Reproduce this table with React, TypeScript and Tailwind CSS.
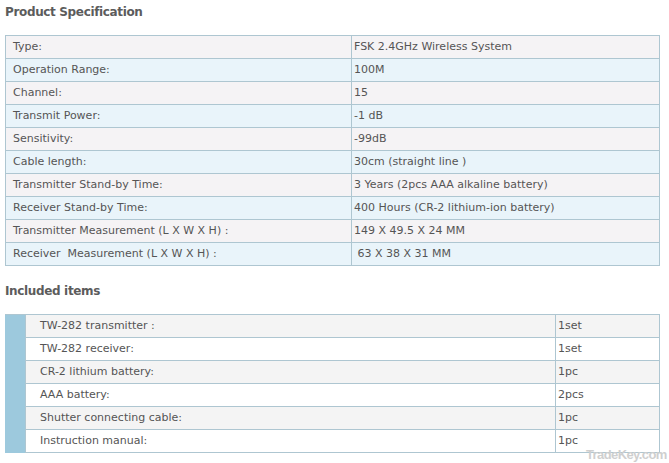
import React from "react";

const spec: [string, string][] = [
  ["Type:", "FSK 2.4GHz Wireless System"],
  ["Operation Range:", "100M"],
  ["Channel:", "15"],
  ["Transmit Power:", "-1 dB"],
  ["Sensitivity:", "-99dB"],
  ["Cable length:", "30cm (straight line )"],
  ["Transmitter Stand-by Time:", "3 Years (2pcs AAA alkaline battery)"],
  ["Receiver Stand-by Time:", "400 Hours (CR-2 lithium-ion battery)"],
  ["Transmitter Measurement (L X W X H) :", "149 X 49.5 X 24 MM"],
  ["Receiver\u00a0 Measurement (L X W X H) :", "\u00a063 X 38 X 31 MM"],
];

const items: [string, string][] = [
  ["TW-282 transmitter :", "1set"],
  ["TW-282 receiver:", "1set"],
  ["CR-2 lithium battery:", "1pc"],
  ["AAA battery:", "2pcs"],
  ["Shutter connecting cable:", "1pc"],
  ["Instruction manual:", "1pc"],
];

export default function App() {
  return (
    <div
      className="relative w-[669px] h-[463px] bg-white text-[#555] overflow-hidden"
      style={{ fontFamily: "Tahoma, 'DejaVu Sans', Verdana, sans-serif" }}
    >
      <div className="h-[35px] pl-[5px] pt-[3px] text-[12px] font-bold text-[#5c5c5c] leading-[18px] tracking-[-0.35px]">
        Product Specification
      </div>
      <div className="ml-[5px] w-[655px] border-l border-t border-[#aec6d1]">
        {spec.map(([a, b], i) => (
          <div
            key={i}
            className={`flex h-[23px] ${i % 2 === 0 ? "bg-[#f5f3f5]" : "bg-[#e9f4fa]"}`}
          >
            <div className="w-[346px] border-r border-b border-[#aec6d1] pl-[7px] text-[11px] leading-[22px] whitespace-pre">
              {a}
            </div>
            <div className="w-[308px] border-r border-b border-[#aec6d1] pl-[2px] text-[11px] leading-[22px] whitespace-pre">
              {b}
            </div>
          </div>
        ))}
      </div>
      <div className="h-[48px] pl-[5px] pt-[16px] text-[12px] font-bold text-[#5c5c5c] leading-[18px] tracking-[-0.35px]">
        Included items
      </div>
      <div className="ml-[5px] w-[655px] flex border-t border-[#aec6d1]">
        <div className="w-[20px] bg-[#9dc9dd]" />
        <div className="flex-1 border-l border-[#aec6d1]">
          {items.map(([a, b], i) => (
            <div
              key={i}
              className={`flex h-[23px] ${i % 2 === 0 ? "bg-[#f4f4f4]" : "bg-white"}`}
            >
              <div className="w-[530px] border-r border-b border-[#aec6d1] pl-[14px] text-[11px] leading-[22px]">
                {a}
              </div>
              <div className="w-[104px] border-r border-b border-[#aec6d1] pl-[2px] text-[11px] leading-[22px]">
                {b}
              </div>
            </div>
          ))}
        </div>
      </div>
      <div
        className="absolute left-[586px] top-[447px] text-[13px] leading-[15px] font-bold text-[#cfcfcf] tracking-[-0.6px]"
        style={{ fontFamily: "'Liberation Sans', Arial, sans-serif" }}
      >
        TradeKey.com
      </div>
    </div>
  );
}
